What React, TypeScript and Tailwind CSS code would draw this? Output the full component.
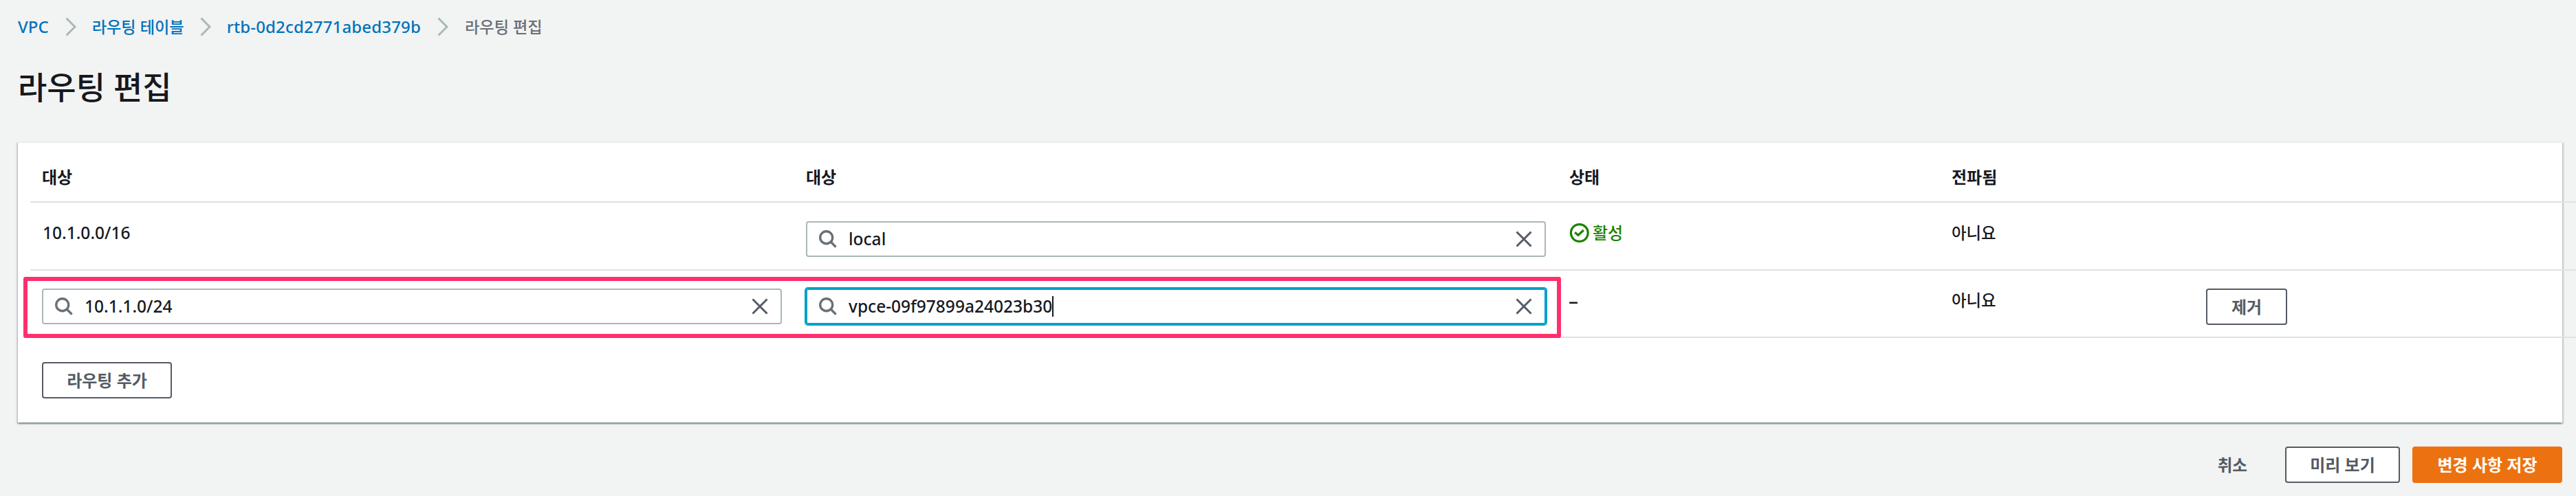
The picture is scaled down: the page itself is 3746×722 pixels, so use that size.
import type { ReactNode } from "react";

function Chevron() {
  return (
    <svg width="16" height="28" viewBox="0 0 16 28" fill="none" className="shrink-0">
      <path d="M1.5 1.5 14 14 1.5 26.5" stroke="#aab7b8" strokeWidth="3" />
    </svg>
  );
}

function SearchIcon() {
  return (
    <svg width="26" height="26" viewBox="0 0 26 26" fill="none" className="shrink-0">
      <circle cx="10.7" cy="10.7" r="9" stroke="#687078" strokeWidth="3.4" />
      <path d="M16.8 16.8 24.6 24.6" stroke="#687078" strokeWidth="3.4" />
    </svg>
  );
}

function CloseIcon() {
  return (
    <svg width="24" height="24" viewBox="0 0 24 24" fill="none" className="ml-auto shrink-0">
      <path d="M1.5 1.5 22.5 22.5M22.5 1.5 1.5 22.5" stroke="#545b64" strokeWidth="3" />
    </svg>
  );
}

function CheckCircle() {
  return (
    <svg width="29" height="28" viewBox="0 0 29 28" fill="none" className="shrink-0">
      <circle cx="14.8" cy="14" r="12.4" stroke="#1d8102" strokeWidth="3.2" />
      <path d="M8.2 13.2 13 17.4 20.8 10" stroke="#1d8102" strokeWidth="3.2" />
    </svg>
  );
}

function SearchField({ value, focused = false }: { value: string; focused?: boolean }) {
  return (
    <div
      className={
        focused
          ? "flex h-[52px] w-[1076px] items-center rounded-[3px] border-2 border-[#00a1c9] pl-[17px] pr-[18px] ring-2 ring-[#00a1c9]"
          : "flex h-[52px] w-[1076px] items-center rounded-[4px] border-2 border-[#aab7b8] pl-[17px] pr-[18px]"
      }
    >
      <SearchIcon />
      <span className="ml-[17px] text-[24.5px]">{value}</span>
      {focused && <span className="h-[30px] w-0.5 bg-[#16191f]" />}
      <CloseIcon />
    </div>
  );
}

function Button({ children, className }: { children: ReactNode; className: string }) {
  return (
    <button
      className={`flex h-[53px] items-center justify-center rounded-[4px] border-2 text-[24px] font-bold leading-none ${className}`}
    >
      {children}
    </button>
  );
}

const row =
  "grid w-[3702px] grid-cols-[1111px_1110px_556px_370px_1fr] items-start border-b-2 border-[#e0e0e0] pl-[17px]";

export default function App() {
  return (
    <div className="h-[722px] w-[3746px] overflow-hidden bg-[#f2f3f3] font-['Noto_Sans','Noto_Sans_CJK_KR',sans-serif] text-[24px] font-medium leading-[36px] text-[#16191f]">
      <nav className="flex h-[78px] items-center pl-[26px] text-[24px] text-[#0073bb]">
        <a className="mr-6">VPC</a>
        <Chevron />
        <a className="ml-[23px] mr-[23px] text-[23.2px]">라우팅 테이블</a>
        <Chevron />
        <a className="ml-[23px] mr-6 tracking-[0.15px]">rtb-0d2cd2771abed379b</a>
        <Chevron />
        <span className="ml-6 text-[23.2px] text-[#687078]">라우팅 편집</span>
      </nav>
      <h1 className="ml-[26px] mt-[18px] h-[60px] text-[46px] leading-[60px]">라우팅 편집</h1>

      <main className="ml-[26px] mt-[50px] h-[409px] w-[3700px] border-t-2 border-[#eaeded] bg-white pl-[18px] shadow-[0_2px_2px_0_rgba(0,28,36,0.3),2px_2px_2px_0_rgba(0,28,36,0.15),-2px_2px_2px_0_rgba(0,28,36,0.15)]">
        <div className={`${row} h-[87px] pt-8 font-bold`}>
          <span>대상</span>
          <span>대상</span>
          <span>상태</span>
          <span>전파됨</span>
        </div>
        <div className={`${row} h-[99px] pt-[26px]`}>
          <span className="pl-px text-[24.5px]">10.1.0.0/16</span>
          <div className="pt-px">
            <SearchField value="local" />
          </div>
          <span className="flex items-center gap-[5px] text-[#1d8102]">
            <CheckCircle />
            활성
          </span>
          <span className="text-[23.4px]">아니요</span>
        </div>
        <div className={`${row} relative h-[98px] pt-[26px]`}>
          <SearchField value="10.1.1.0/24" />
          <SearchField value="vpce-09f97899a24023b30" focused />
          <span className="-ml-px text-[28px]">–</span>
          <span className="-mt-px text-[23.4px]">아니요</span>
          <Button className="w-[118px] border-[#545b64] bg-white text-[#545b64]">제거</Button>
          <div className="absolute -left-[10px] top-[9px] h-[89px] w-[2236px] rounded-[3px] border-[6px] border-[#ff2f6c]" />
        </div>
        <div className="pl-[17px] pt-[35px]">
          <Button className="w-[189px] border-[#545b64] bg-white text-[#545b64]">라우팅 추가</Button>
        </div>
      </main>

      <footer className="mt-[35px] flex items-center justify-end pr-5">
        <button className="mr-[55px] text-[23.5px] font-bold text-[#545b64]">취소</button>
        <Button className="mr-[18px] w-[167px] border-[#545b64] bg-white text-[#545b64]">미리 보기</Button>
        <Button className="w-[218px] border-[#ec7211] bg-[#ec7211] text-white">변경 사항 저장</Button>
      </footer>
    </div>
  );
}
